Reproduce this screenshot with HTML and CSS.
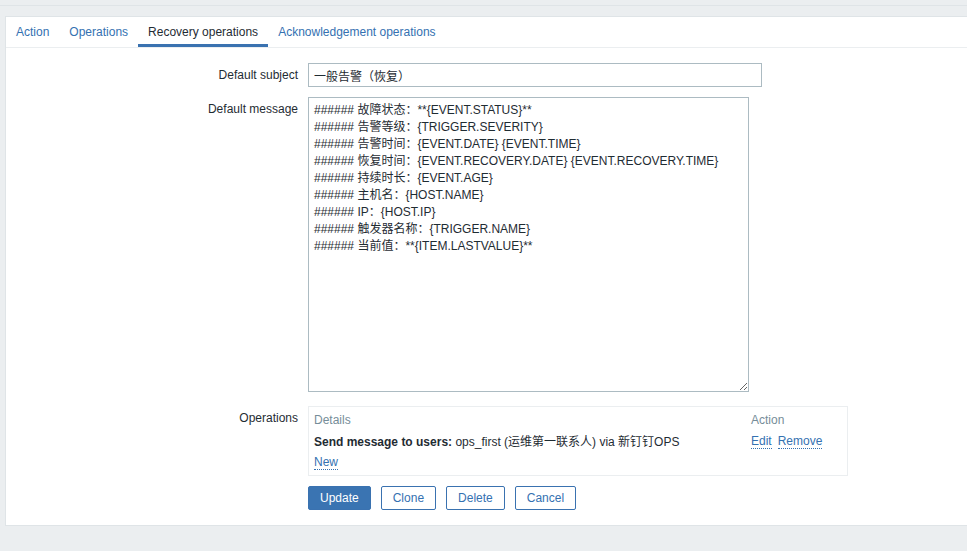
FILE: index.html
```html
<!DOCTYPE html>
<html lang="zh">
<head>
<meta charset="utf-8">
<title>Recovery operations</title>
<link rel="stylesheet" href="styles.css">
</head>
<body>
<div class="top-strip"></div>
<div class="panel">
  <ul class="tabs">
    <li><a class="tab" href="#">Action</a></li>
    <li><a class="tab" href="#">Operations</a></li>
    <li><a class="tab active" href="#">Recovery operations</a></li>
    <li><a class="tab" href="#">Acknowledgement operations</a></li>
  </ul>
  <form class="form">
    <div class="row row-subject">
      <label class="label">Default subject</label>
      <div class="field"><input class="input" type="text" value="一般告警（恢复）"></div>
    </div>
    <div class="row row-message">
      <label class="label">Default message</label>
      <div class="field"><textarea class="textarea">###### 故障状态：**{EVENT.STATUS}**
###### 告警等级：{TRIGGER.SEVERITY}
###### 告警时间：{EVENT.DATE} {EVENT.TIME}
###### 恢复时间：{EVENT.RECOVERY.DATE} {EVENT.RECOVERY.TIME}
###### 持续时长：{EVENT.AGE}
###### 主机名：{HOST.NAME}
###### IP：{HOST.IP}
###### 触发器名称：{TRIGGER.NAME}
###### 当前值：**{ITEM.LASTVALUE}**</textarea></div>
    </div>
    <div class="row row-ops">
      <label class="label label-ops">Operations</label>
      <div class="field">
        <div class="ops-box">
          <div class="ops-row ops-head">
            <div class="col-details">Details</div>
            <div class="col-action">Action</div>
          </div>
          <div class="ops-row">
            <div class="col-details"><b>Send message to users:</b> ops_first (运维第一联系人) via 新钉钉OPS</div>
            <div class="col-action"><a class="link" href="#">Edit</a><a class="link" href="#">Remove</a></div>
          </div>
          <div class="ops-row">
            <div class="col-details"><a class="link" href="#">New</a></div>
          </div>
        </div>
      </div>
    </div>
    <div class="row row-buttons">
      <div class="label"></div>
      <div class="field buttons">
        <button type="button" class="btn btn-primary">Update</button>
        <button type="button" class="btn">Clone</button>
        <button type="button" class="btn">Delete</button>
        <button type="button" class="btn">Cancel</button>
      </div>
    </div>
  </form>
</div>
</body>
</html>
```
FILE: styles.css
```css
* { box-sizing: border-box; }
html, body {
  margin: 0;
  padding: 0;
  background: #ebeef0;
  overflow: hidden;
}
body {
  font-family: "Liberation Sans", Arial, "Noto Sans CJK SC", sans-serif;
  font-size: 12px;
  color: #1f2c33;
  width: 967px;
  height: 551px;
}
.top-strip {
  height: 6px;
  border-bottom: 1px solid #dfe4e7;
}
.panel {
  margin: 10px 0 0 5px;
  width: 980px;
  background: #fff;
  border: 1px solid #dfe4e7;
  border-right: none;
  padding-bottom: 15px;
}
.tabs {
  list-style: none;
  margin: 0;
  padding: 0;
  display: flex;
  border-bottom: 1px solid #ebeef0;
  height: 31px;
}
.tabs li { display: block; }
.tab {
  display: block;
  height: 30px;
  line-height: 31px;
  padding: 0 10px;
  color: #3471b1;
  text-decoration: none;
  border-bottom: 3px solid transparent;
}
.tab.active {
  color: #1f2c33;
  border-bottom-color: #3a72b0;
}
.form {
  padding-top: 15px;
}
.row {
  display: grid;
  grid-template-columns: 292px 1fr;
  column-gap: 10px;
}
.label {
  text-align: right;
  padding-top: 5px;
  line-height: 14px;
  color: #1f2c33;
}
.row-subject { margin-bottom: 10px; }
.row-message { margin-bottom: 14px; }
.row-ops { margin-bottom: 10px; }
.label-ops { padding-top: 5px; }
.input {
  display: block;
  width: 454px;
  height: 24px;
  border: 1px solid #acbbc2;
  border-radius: 0;
  padding: 0 5px;
  font: inherit;
  color: #1f2c33;
  outline: none;
}
.textarea {
  display: block;
  width: 441px;
  height: 295px;
  border: 1px solid #acbbc2;
  border-radius: 0;
  padding: 4px 5px;
  font: inherit;
  line-height: 17px;
  color: #1f2c33;
  resize: both;
  outline: none;
  margin: 0;
}
.ops-box {
  width: 540px;
  border: 1px solid #ebeef0;
  padding: 3px 5px 2px 5px;
}
.ops-row {
  display: flex;
  height: 20.5px;
  line-height: 20px;
  white-space: nowrap;
}
.ops-head { color: #768d99; height: 21.5px; }
.col-details { flex: 1; }
.col-action {
  width: 91px;
  display: flex;
  gap: 6px;
}
.link {
  color: #3471b1;
  text-decoration: none;
  border-bottom: 1px dotted #3471b1;
  line-height: 13px;
  align-self: center;
}
.col-details .link { display: inline-block; }
.buttons {
  display: flex;
  gap: 10px;
}
.btn {
  height: 24px;
  padding: 0 11px;
  border: 1px solid #3a72b0;
  border-radius: 2px;
  background: #fff;
  color: #3471b1;
  font: inherit;
  cursor: pointer;
}
.btn-primary {
  background: #3a74b2;
  color: #fff;
  padding: 0 11px;
}
```
